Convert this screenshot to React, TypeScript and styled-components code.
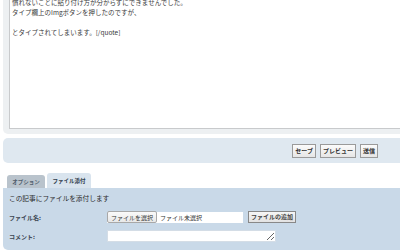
import React from "react";
import styled, { createGlobalStyle } from "styled-components";

const Global = createGlobalStyle`
  html, body { margin: 0; padding: 0; background: #ffffff; }
  body {
    width: 400px;
    height: 252px;
    overflow: hidden;
    font-family: "Noto Sans CJK JP", "Noto Sans", sans-serif;
    color: #333333;
  }
`;

const Page = styled.div`
  display: flex;
  flex-direction: column;
  width: 400px;
`;

const EditorFrame = styled.div`
  margin-left: 3px;
  background: #edf0f2;
  padding: 0 0 5px 6px;
  border-bottom-left-radius: 5px;
`;

const EditorBox = styled.div`
  box-sizing: border-box;
  margin-top: -6px;
  height: 135px;
  background: #ffffff;
  border: 1px solid #c8cacc;
  border-right: none;
  padding: 2px 0 0 2px;
  font-size: 6.5px;
  line-height: 10px;
  color: #3a3a3a;
`;

const Line = styled.div`
  height: 10px;
  white-space: nowrap;
`;

const ButtonBar = styled.div`
  margin: 4px 0 0 3px;
  height: 25px;
  background: #dfe8f0;
  border-radius: 5px 0 0 5px;
  display: flex;
  justify-content: flex-end;
  align-items: center;
  gap: 4px;
  padding-right: 22px;
`;

const ActionButton = styled.button`
  box-sizing: border-box;
  height: 14px;
  padding: 0 2px;
  border: 1px solid #9a9a9a;
  background: linear-gradient(#fbfbfb, #e6e6e6);
  font-family: "Noto Sans CJK JP", sans-serif;
  font-size: 6px;
  font-weight: 700;
  line-height: 12px;
  color: #333;
  cursor: pointer;
`;

const TabsRow = styled.div`
  margin-top: 10px;
  padding-left: 7px;
  display: flex;
  align-items: flex-end;
  gap: 2px;
`;

const Tab = styled.div<{ $active?: boolean }>`
  width: ${(p) => (p.$active ? "44px" : "38px")};
  height: ${(p) => (p.$active ? "15px" : "13px")};
  background: ${(p) => (p.$active ? "#d9e4ee" : "#b9c3cc")};
  border-radius: 3px 3px 0 0;
  display: flex;
  align-items: center;
  justify-content: center;
  font-size: 5.5px;
  font-weight: 700;
  color: ${(p) => (p.$active ? "#2f3d4c" : "#4e5d6c")};
`;

const Panel = styled.div`
  box-sizing: border-box;
  margin-left: 3px;
  height: 62px;
  background: #c9d9e8;
  border-bottom-left-radius: 5px;
  padding: 5px 6px 0;
`;

const Intro = styled.div`
  font-size: 6.7px;
  line-height: 10px;
  color: #2a2a2a;
`;

const Form = styled.div`
  margin-top: 7px;
  display: grid;
  grid-template-columns: 98px auto;
  grid-auto-rows: auto;
  row-gap: 6px;
  align-items: center;
`;

const Label = styled.div`
  font-size: 6px;
  font-weight: 700;
  color: #3c4652;
`;

const FileRow = styled.div`
  display: flex;
  align-items: center;
  gap: 5px;
  height: 14px;
`;

const FileBox = styled.div`
  width: 136px;
  height: 11px;
  background: #ffffff;
  display: flex;
  align-items: center;
  gap: 3px;
  font-size: 6px;
  color: #333;
`;

const ChooseButton = styled.span`
  box-sizing: border-box;
  height: 12px;
  padding: 0 3px;
  border: 1px solid #a8a8a8;
  border-radius: 2px;
  background: linear-gradient(#fafafa, #e8e8e8);
  display: flex;
  align-items: center;
  font-size: 6px;
  color: #333;
`;

const AddButton = styled.button`
  box-sizing: border-box;
  height: 12px;
  padding: 0 2px;
  border: 1px solid #888888;
  background: linear-gradient(#f6f6f6, #e2e2e2);
  font-family: "Noto Sans CJK JP", sans-serif;
  font-size: 6px;
  font-weight: 700;
  line-height: 10px;
  color: #444;
`;

const CommentArea = styled.textarea`
  box-sizing: border-box;
  width: 169px;
  height: 12px;
  min-height: 12px;
  padding: 0;
  margin: 0;
  border: 1px solid #d4dde6;
  background: #ffffff;
  resize: both;
  display: block;
`;

export default function App() {
  return (
    <>
      <Global />
      <Page>
        <EditorFrame>
          <EditorBox>
            <Line>慣れないことに貼り付け方が分からずにできませんでした。</Line>
            <Line>タイプ欄上のImgボタンを押したのですが、</Line>
            <Line />
            <Line>とタイプされてしまいます。[/quote]</Line>
          </EditorBox>
        </EditorFrame>
        <ButtonBar>
          <ActionButton>セーブ</ActionButton>
          <ActionButton>プレビュー</ActionButton>
          <ActionButton>送信</ActionButton>
        </ButtonBar>
        <TabsRow>
          <Tab>オプション</Tab>
          <Tab $active>ファイル添付</Tab>
        </TabsRow>
        <Panel>
          <Intro>この記事にファイルを添付します</Intro>
          <Form>
            <Label>ファイル名:</Label>
            <FileRow>
              <FileBox>
                <ChooseButton>ファイルを選択</ChooseButton>
                ファイル未選択
              </FileBox>
              <AddButton>ファイルの追加</AddButton>
            </FileRow>
            <Label>コメント:</Label>
            <CommentArea readOnly defaultValue="" />
          </Form>
        </Panel>
      </Page>
    </>
  );
}
